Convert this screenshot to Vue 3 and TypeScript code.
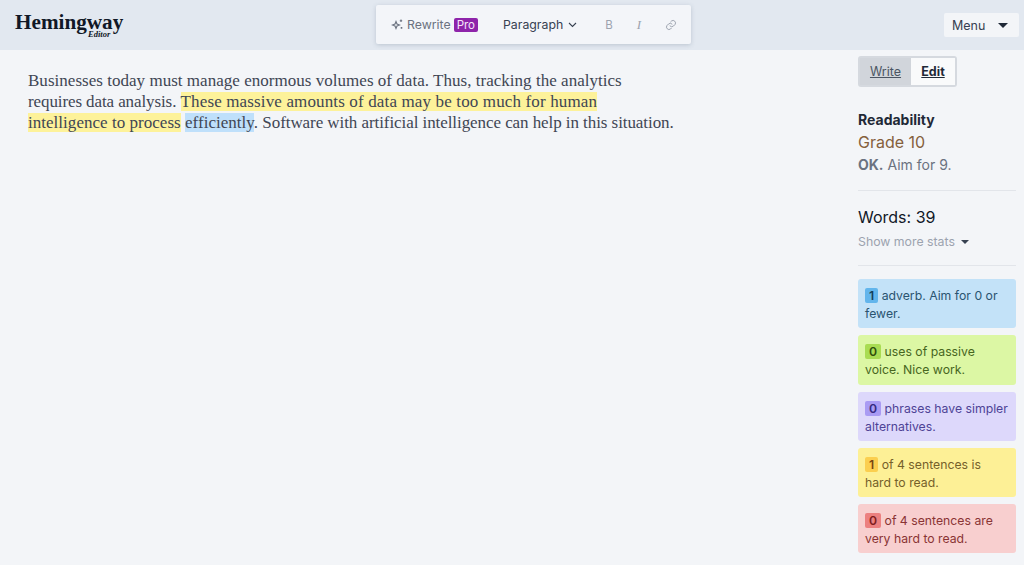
<script setup lang="ts">
interface Card { n: string; text: string; kind: string }
const cards: Card[] = [
  { n: '1', text: 'adverb. Aim for 0 or fewer.', kind: 'blue' },
  { n: '0', text: 'uses of passive voice. Nice work.', kind: 'green' },
  { n: '0', text: 'phrases have simpler alternatives.', kind: 'purple' },
  { n: '1', text: 'of 4 sentences is hard to read.', kind: 'yellow' },
  { n: '0', text: 'of 4 sentences are very hard to read.', kind: 'red' },
]
</script>

<template>
  <div class="page">
    <header class="header">
      <div class="logo">
        <span class="logo-main">Hemingway</span>
        <span class="logo-sub">Editor</span>
      </div>
      <div class="toolbar">
        <span class="rewrite">
          <svg width="13" height="13" viewBox="0 0 13 13" fill="none" stroke="#6b7280" stroke-width="1.1">
            <path d="M5 3.5 L6 6 L8.5 7 L6 8 L5 10.5 L4 8 L1.5 7 L4 6 Z" />
            <path d="M10 1.5v2.5M8.8 2.8h2.4M10.5 9v1.8M9.6 9.9h1.8" />
          </svg>
          Rewrite
        </span>
        <span class="pro">Pro</span>
        <span class="para">
          Paragraph
          <svg width="9" height="6" viewBox="0 0 9 6" fill="none" stroke="#374151" stroke-width="1.1"><path d="M1 1l3.5 3.5L8 1" /></svg>
        </span>
        <span class="fmt b">B</span>
        <span class="fmt i">I</span>
        <svg class="link" width="12" height="12" viewBox="0 0 24 24" fill="none" stroke="#9ca3af" stroke-width="2" stroke-linecap="round">
          <path d="M10 14a5 5 0 0 0 7 0l3-3a5 5 0 0 0-7-7l-1.5 1.5" />
          <path d="M14 10a5 5 0 0 0-7 0l-3 3a5 5 0 0 0 7 7l1.5-1.5" />
        </svg>
      </div>
      <button class="menu">
        <span>Menu</span>
        <span class="menu-caret"></span>
      </button>
    </header>
    <main class="main">
      <div class="editor">
        <p class="copy">
          Businesses today must manage enormous volumes of data. Thus, tracking the analytics<br />
          <span class="tight-a">requires data analysis.</span> <span class="hl-y"><span class="loose">These massive amounts of data may be too much for human</span><br />
          intelligence to process</span> <span class="hl-b">efficiently</span>. <span class="tight-b">Software with artificial intelligence can help in this situation.</span>
        </p>
      </div>
      <aside class="side">
        <div class="switch">
          <span class="tab write">Write</span>
          <span class="tab edit">Edit</span>
        </div>
        <h2 class="read-title">Readability</h2>
        <div class="grade">Grade 10</div>
        <div class="aim"><b>OK.</b> Aim for 9.</div>
        <hr class="rule first" />
        <div class="words">Words: 39</div>
        <div class="more">Show more stats <span class="more-caret"></span></div>
        <hr class="rule second" />
        <div class="cards">
          <div v-for="c in cards" :key="c.kind" class="card" :class="c.kind">
            <span class="num">{{ c.n }}</span> {{ c.text }}
          </div>
        </div>
      </aside>
    </main>
  </div>
</template>

<style>
html, body { margin: 0; background: #f3f5f8; }
</style>

<style scoped>
.page {
  width: 1024px;
  height: 565px;
  overflow: hidden;
  background: #f3f5f8;
  font-family: Inter, "Liberation Sans", sans-serif;
  display: flex;
  flex-direction: column;
}
.header {
  height: 50px;
  flex: none;
  background: #e2e8f0;
  display: flex;
  align-items: center;
  position: relative;
  padding: 0 5px 0 15px;
  box-sizing: border-box;
  justify-content: space-between;
}
.logo { position: relative; width: 110px; height: 30px; color: #111827; }
.logo-main {
  font-family: "Liberation Serif", serif;
  font-weight: 700;
  font-size: 21.2px;
  line-height: 22px;
  display: block;
  margin-top: 1px;
}
.logo-sub {
  position: absolute;
  left: 73px;
  top: 19px;
  font-family: "Liberation Serif", serif;
  font-style: italic;
  font-weight: 700;
  font-size: 8.5px;
  line-height: 10px;
}
.toolbar {
  position: absolute;
  left: 376px;
  top: 5px;
  width: 315px;
  height: 39px;
  box-sizing: border-box;
  background: #f3f5f9;
  border-radius: 2px;
  box-shadow: 0 1px 4px rgba(100, 116, 139, 0.3);
  display: flex;
  align-items: center;
  padding-left: 15px;
  font-size: 12.3px;
  color: #6b7280;
}
.rewrite { display: flex; align-items: center; gap: 3px; }
.pro {
  margin-left: 3px;
  background: #8e24aa;
  color: #f5e6fa;
  font-size: 11.5px;
  line-height: 14px;
  padding: 0 3px;
  border-radius: 2px;
}
.para {
  margin-left: 25px;
  color: #374151;
  display: flex;
  align-items: center;
  gap: 5px;
}
.fmt { color: #9ca3af; font-size: 11.5px; }
.b { margin-left: 28px; }
.i { margin-left: 24px; font-family: "Liberation Serif", serif; font-style: italic; font-size: 13px; }
.link { margin-left: 24px; }
.menu {
  width: 75px;
  height: 24px;
  border: none;
  border-radius: 2px;
  background: #f3f5f8;
  padding: 0 11px 0 8px;
  display: flex;
  align-items: center;
  justify-content: space-between;
  font: 12.5px Inter, "Liberation Sans", sans-serif;
  color: #374151;
}
.menu-caret {
  width: 0;
  height: 0;
  border-left: 5.5px solid transparent;
  border-right: 5.5px solid transparent;
  border-top: 5.5px solid #1f2937;
}
.main { flex: 1; display: flex; min-height: 0; }
.editor { flex: 1; padding: 20px 0 0 28px; }
.copy {
  margin: 0;
  font-family: "Liberation Serif", serif;
  font-size: 17px;
  letter-spacing: 0.03px;
  line-height: 21px;
  color: #3f4654;
  white-space: nowrap;
}
.tight-a { letter-spacing: -0.1px; }
.loose { letter-spacing: 0.14px; }
.tight-b { letter-spacing: -0.07px; }
.hl-y { background: #fdf29a; }
.hl-b { background: #bfe0fb; }
.side { width: 158px; flex: none; margin-right: 8px; padding-top: 6px; }
.switch {
  width: 99px;
  height: 31px;
  box-sizing: border-box;
  border: 2px solid #d5d9df;
  border-radius: 3px;
  display: flex;
  font-size: 12.5px;
  background: #f3f4f6;
}
.tab { display: flex; align-items: center; justify-content: center; text-decoration: underline; }
.write { width: 51px; background: #d1d5db; color: #4b5563; }
.edit { flex: 1; font-weight: 700; color: #1f2937; background: #f9fafb; }
.read-title { margin: 23px 0 0; font-size: 14px; line-height: 20px; font-weight: 700; color: #1f2937; }
.grade { font-size: 16px; line-height: 24px; color: #85603c; margin-top: 0; }
.aim { font-size: 14px; line-height: 20px; color: #6b7280; margin-top: 1px; }
.rule { border: none; border-top: 1px solid #e2e5ea; margin: 0; }
.first { margin-top: 15px; }
.words { margin-top: 16px; font-size: 16px; line-height: 20px; color: #111827; }
.more { margin-top: 5px; font-size: 12.3px; line-height: 20px; color: #9ca3af; }
.more-caret {
  display: inline-block;
  margin-left: 3px;
  vertical-align: 2px;
  border-left: 4px solid transparent;
  border-right: 4px solid transparent;
  border-top: 4.5px solid #374151;
}
.second { margin-top: 13px; }
.cards { margin-top: 13px; display: flex; flex-direction: column; gap: 7px; }
.card {
  height: 49.25px;
  box-sizing: border-box;
  border-radius: 3px;
  padding: 8px 7px 0;
  font-size: 12.25px;
  line-height: 18px;
}
.num { padding: 0 4px; border-radius: 2px; font-weight: 600; }
.blue { background: #c3e2f8; color: #2a5470; }
.blue .num { background: #62b5ec; color: #14405e; }
.green { background: #dcf7a4; color: #47661e; }
.green .num { background: #a9dc52; color: #2f4f0a; }
.purple { background: #ddd8fb; color: #4e4396; }
.purple .num { background: #a99bf3; color: #352a80; }
.yellow { background: #fdf096; color: #75602a; }
.yellow .num { background: #fbcf4f; color: #78450f; }
.red { background: #f8cfcf; color: #8a3434; }
.red .num { background: #ec8080; color: #7f1d1d; }
</style>
